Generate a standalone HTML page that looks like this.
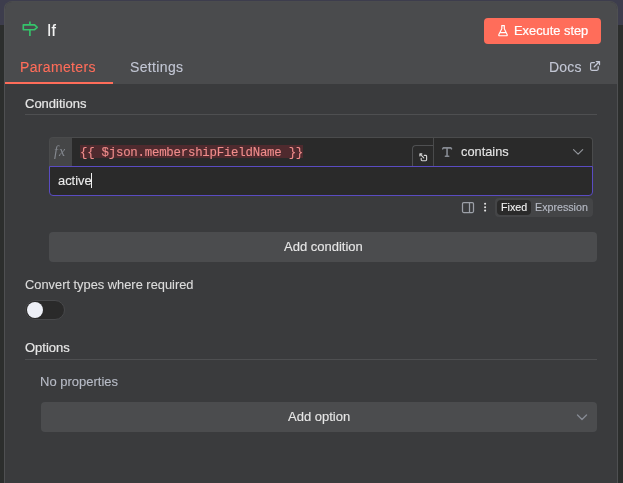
<!DOCTYPE html>
<html><head><meta charset="utf-8">
<style>
*{box-sizing:border-box;margin:0;padding:0}
html,body{width:623px;height:483px;overflow:hidden}
body{background:#2c2e2d;position:relative;-webkit-font-smoothing:antialiased;font-family:"Liberation Sans",sans-serif}
.a{position:absolute}
.t{position:absolute;white-space:nowrap;line-height:1;will-change:transform;-webkit-text-stroke:0.12px currentColor}
.m{-webkit-text-stroke:0.2px currentColor}
#topbg{left:0;top:0;width:623px;height:25px;background:#3d3d4d}
#panel{left:4px;top:1px;width:614px;height:490px;background:#3a3b3d;border:1px solid #4f5052;border-top-color:#4b4c4e;border-bottom:none;border-radius:8px 8px 0 0;overflow:hidden}
#hdr{left:0;top:0;width:612px;height:82px;background:#4a4b4d}
.btn{background:#4b4c4e;border-radius:4px}
</style></head><body>
<div id="topbg" class="a"></div>
<div id="panel" class="a">
  <div id="hdr" class="a"></div>
</div>

<!-- header -->
<svg class="a" style="left:21px;top:20px" width="18" height="18" viewBox="0 0 18 18">
  <path d="M8.9 1.6v3.3 M8.9 9.7v6.4 M2.3 4.9h11.3l2.6 2.4-2.6 2.4H2.3z" fill="none" stroke="#35c46b" stroke-width="1.65" stroke-linejoin="round"/>
</svg>
<div class="t" style="left:47px;top:22.5px;font-size:16px;color:#f4f4f4">If</div>

<div class="a" style="left:484px;top:18px;width:117px;height:26px;background:#ff6d5a;border-radius:4px"></div>
<svg class="a" style="left:497px;top:24px" width="12" height="14" viewBox="0 0 12 14">
  <path d="M4.7 1.6h2.7 M4.8 1.6v3.2L1.9 10.5q-.6 1.2.7 1.2h6.8q1.3 0 .7-1.2L7.3 4.8V1.6 M3.2 8.6h5.6" fill="none" stroke="#fff" stroke-width="1.15" stroke-linecap="round" stroke-linejoin="round"/>
</svg>
<div class="t" style="left:513.9px;top:24.5px;font-size:12.85px;color:#fff;-webkit-text-stroke:0.22px #fff">Execute step</div>

<div class="t" style="left:20px;top:60.2px;font-size:14px;color:#ff6d5a;letter-spacing:0.35px">Parameters</div>
<div class="t" style="left:130px;top:60.2px;font-size:14px;color:#c2c6d4;letter-spacing:0.35px">Settings</div>
<div class="a" style="left:5px;top:82px;width:108px;height:2px;background:#ff6d5a"></div>
<div class="t" style="left:549.3px;top:60.1px;font-size:14px;color:#c2c6d4;letter-spacing:0.2px">Docs</div>
<svg class="a" style="left:589px;top:60px" width="12" height="12" viewBox="0 0 12 12">
  <path d="M5.4 2.6H2.8q-1.2 0-1.2 1.2v5.3q0 1.2 1.2 1.2h5.2q1.2 0 1.2-1.2V6.6 M7.3 1.5h3.2v3.2 M10.2 1.8 5.2 6.8" fill="none" stroke="#c3c7d5" stroke-width="1.25" stroke-linecap="round" stroke-linejoin="round"/>
</svg>

<!-- conditions -->
<div class="t m" style="left:25px;top:97px;font-size:13px;color:#e6e6e6">Conditions</div>
<div class="a" style="left:25px;top:114px;width:572px;height:1px;background:#4e4f51"></div>

<!-- condition row -->
<div class="a" style="left:49px;top:137px;width:544px;height:30px;background:#4a4b4c;border-radius:4px 4px 0 0"></div>
<div class="a" style="left:50px;top:138px;width:22px;height:28px;background:#454647;border-radius:3px 0 0 0"></div>
<div class="a" style="left:72px;top:138px;width:361px;height:28px;background:#2a2a2a"></div>
<div class="a" style="left:434px;top:138px;width:158px;height:28px;background:#2a2a2a;border-radius:0 3px 0 0"></div>
<div class="t" style="left:54px;top:145px;font-family:'Liberation Serif',serif;font-style:italic;font-size:14px;letter-spacing:1px;color:#858990;-webkit-text-stroke:0">fx</div>
<div class="a" style="left:80px;top:145px;width:223px;height:13px;background:#4f2a2e"></div>
<div class="t" style="left:80.2px;top:147.1px;font-family:'Liberation Mono',monospace;font-size:12.4px;letter-spacing:-0.24px;color:#f08c8b;-webkit-text-stroke:0.12px currentColor">{{ $json.membershipFieldName }}</div>
<div class="a" style="left:412px;top:145px;width:21px;height:22px;border:1px solid #4f5052;border-right:none;border-bottom:none;border-radius:4px 0 0 0;background:#2a2a2a"></div>
<svg class="a" style="left:418px;top:152px" width="11" height="11" viewBox="0 0 11 11">
  <path d="M3.2 6.3V7.8q0 .9.9.9h3.6q.9 0 .9-.9V4.2q0-.9-.9-.9H6.2 M2.2 2.2l3.6 3.6 M1.9 3.9V1.9h2" fill="none" stroke="#d4d4d4" stroke-width="1.15" stroke-linecap="round" stroke-linejoin="round"/>
</svg>
<svg class="a" style="left:440px;top:145px" width="14" height="14" viewBox="0 0 14 14">
  <path d="M2.7 3.9 3.3 2.9h7.6l.6 1 M7.05 2.9v8.4 M5.4 11.3h3.3" fill="none" stroke="#878b93" stroke-width="1.6" stroke-linecap="round" stroke-linejoin="round"/>
</svg>
<div class="t" style="left:460.8px;top:145.9px;font-size:12.8px;color:#e6e6e6">contains</div>
<svg class="a" style="left:572px;top:148px" width="12" height="8" viewBox="0 0 12 8">
  <path d="M1.5 1.7l4.6 4.5 4.6-4.5" fill="none" stroke="#94979d" stroke-width="1.15" stroke-linecap="round" stroke-linejoin="round"/>
</svg>
<div class="a" style="left:49px;top:166px;width:544px;height:30px;background:#2a2a2a;border:1px solid #5a4cc2;border-radius:0 0 4px 4px"></div>
<div class="t" style="left:57.6px;top:174.9px;font-size:12.85px;color:#ececec">active</div>
<div class="a" style="left:91px;top:173px;width:1px;height:15px;background:#f0f0f0"></div>

<!-- toolbar under input -->
<svg class="a" style="left:461px;top:201px" width="14" height="13" viewBox="0 0 14 13">
  <rect x="1.5" y="1.5" width="11" height="10" rx="1.2" fill="none" stroke="#9ca0a8" stroke-width="1.25"/>
  <path d="M8.5 1.5v10" stroke="#9ca0a8" stroke-width="1.25"/>
</svg>
<svg class="a" style="left:482px;top:201px" width="5" height="13" viewBox="0 0 5 13">
  <circle cx="3.1" cy="2.7" r="1.05" fill="#e2e2e2"/><circle cx="3.1" cy="6.2" r="1.05" fill="#e2e2e2"/><circle cx="3.1" cy="9.6" r="1.05" fill="#e2e2e2"/>
</svg>
<div class="a" style="left:495px;top:198px;width:98px;height:19px;background:#444547;border-radius:4px"></div>
<div class="a" style="left:497px;top:200px;width:34px;height:15px;background:#2a2a2a;border-radius:4px"></div>
<div class="t" style="left:501px;top:201.5px;font-size:10.7px;color:#f0f0f0">Fixed</div>
<div class="t" style="left:535px;top:201.5px;font-size:10.7px;color:#b7bbc6">Expression</div>

<div class="a btn" style="left:49px;top:232px;width:548px;height:30px"></div>
<div class="t" style="left:284px;top:240px;font-size:13px;color:#e6e6e6">Add condition</div>

<div class="t" style="left:25px;top:278.5px;font-size:12.85px;color:#dcdcdc">Convert types where required</div>
<div class="a" style="left:25px;top:300px;width:40px;height:20px;background:#2a2a2a;border:1px solid #48494b;border-radius:10px"></div>
<div class="a" style="left:27px;top:302px;width:16px;height:16px;background:#eef0f7;border-radius:50%"></div>

<div class="t m" style="left:25px;top:341.3px;font-size:13px;color:#e6e6e6">Options</div>
<div class="a" style="left:25px;top:359px;width:572px;height:1px;background:#4e4f51"></div>
<div class="t" style="left:40px;top:375px;font-size:13px;color:#b7bbc6">No properties</div>
<div class="a btn" style="left:41px;top:402px;width:556px;height:30px"></div>
<div class="t" style="left:288px;top:409.8px;font-size:13px;color:#e6e6e6">Add option</div>
<svg class="a" style="left:576px;top:413px" width="12" height="9" viewBox="0 0 12 9">
  <path d="M1.5 2l4.5 4.5 4.5-4.5" fill="none" stroke="#868a93" stroke-width="1.4" stroke-linecap="round" stroke-linejoin="round"/>
</svg>
</body></html>
